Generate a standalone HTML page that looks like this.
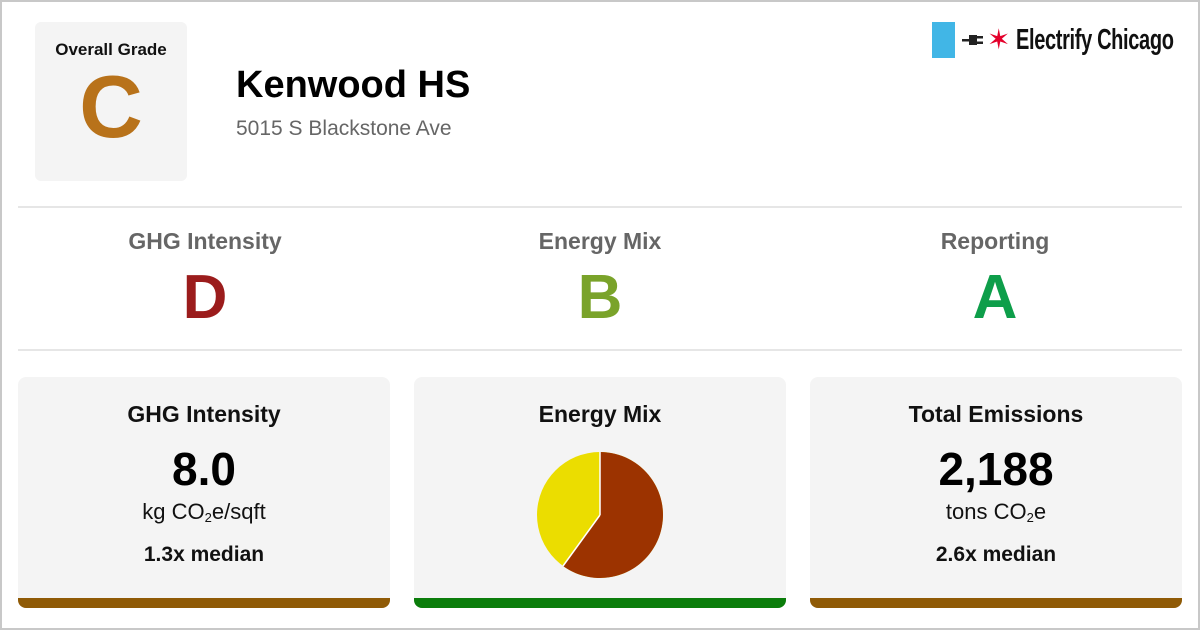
<!DOCTYPE html>
<html><head><style>
*{margin:0;padding:0;box-sizing:border-box}
body{width:1200px;height:630px;background:#fff;font-family:"Liberation Sans",Arial,sans-serif;position:relative;overflow:hidden}
.frame{position:absolute;left:0;top:0;width:1200px;height:630px;border:2px solid #c8c8c8}
.abs{position:absolute}
.og{left:35px;top:22px;width:152px;height:159px;background:#f4f4f4;border-radius:6px;text-align:center}
.og .t{font-weight:bold;font-size:17px;margin-top:18px;color:#111}
.og .g{font-weight:bold;font-size:88px;color:#b8721a;line-height:90px;margin-top:2px}
.hr{left:18px;width:1164px;height:2px;background:#e6e6e6}
.cat{width:300px;text-align:center}
.cat .t{font-weight:bold;font-size:23px;color:#666}
.cat .g{font-weight:bold;font-size:62px;line-height:70px;margin-top:8px}
.card{top:377px;width:372px;height:231px;background:#f4f4f4;border-radius:8px;overflow:hidden;text-align:center}
.card .h{font-weight:bold;font-size:23px;margin-top:24px;color:#111}
.card .v{font-weight:bold;font-size:46px;margin-top:16px;line-height:50px;color:#000}
.card .u{font-size:22px;margin-top:5px;color:#111}
.card .m{font-weight:bold;font-size:21px;margin-top:18px;color:#111}
.card .bar{position:absolute;left:0;bottom:0;width:100%;height:10px}
sub{font-size:13px;vertical-align:-3px}
</style></head><body>
<div class="frame"></div>
<div class="abs og"><div class="t">Overall Grade</div><div class="g">C</div></div>
<div class="abs" style="left:236px;top:64px;font-weight:bold;font-size:38px;color:#000">Kenwood HS</div>
<div class="abs" style="left:236px;top:117px;font-size:21px;color:#666">5015 S Blackstone Ave</div>
<div class="abs" style="left:932px;top:22px;width:23px;height:36px;background:#41b6e6"></div>
<svg class="abs" style="left:962px;top:33px" width="24" height="14" viewBox="0 0 24 14"><rect x="0" y="6" width="7" height="2.5" fill="#222"/><rect x="7" y="2" width="8" height="10" fill="#222"/><rect x="15" y="3" width="6" height="2.5" fill="#222"/><rect x="15" y="8.5" width="6" height="2.5" fill="#222"/></svg>
<div class="abs" style="left:987px;top:24px;font-size:28px;color:#e4002b;line-height:32px">✶</div>
<div class="abs" style="left:1016px;top:24px;font-size:29px;font-weight:bold;color:#111;letter-spacing:-0.5px;transform:scaleX(0.69);transform-origin:left;white-space:nowrap">Electrify Chicago</div>
<div class="abs hr" style="top:206px"></div>
<div class="abs hr" style="top:349px"></div>
<div class="abs cat" style="left:55px;top:228px"><div class="t">GHG Intensity</div><div class="g" style="color:#9b1c1c">D</div></div>
<div class="abs cat" style="left:450px;top:228px"><div class="t">Energy Mix</div><div class="g" style="color:#7aa32a">B</div></div>
<div class="abs cat" style="left:845px;top:228px"><div class="t">Reporting</div><div class="g" style="color:#0e9e4a">A</div></div>
<div class="abs card" style="left:18px"><div class="h">GHG Intensity</div><div class="v">8.0</div><div class="u">kg CO<sub>2</sub>e/sqft</div><div class="m">1.3x median</div><div class="bar" style="background:#8f5a06"></div></div>
<div class="abs card" style="left:414px"><div class="h">Energy Mix</div>
<svg class="abs" style="left:122px;top:74px" width="128" height="128" viewBox="-64 -64 128 128">
<circle r="63" fill="#ebdd00"/>
<path d="M0 0 L0 -63 A63 63 0 1 1 -37 51 Z" fill="#9c3300"/>
<path d="M0 0 L0 -63 M0 0 L-37 51" stroke="#fff" stroke-width="1.5"/>
</svg>
<div class="bar" style="background:#0b7d0b"></div></div>
<div class="abs card" style="left:810px"><div class="h">Total Emissions</div><div class="v">2,188</div><div class="u">tons CO<sub>2</sub>e</div><div class="m">2.6x median</div><div class="bar" style="background:#8f5a06"></div></div>
</body></html>
